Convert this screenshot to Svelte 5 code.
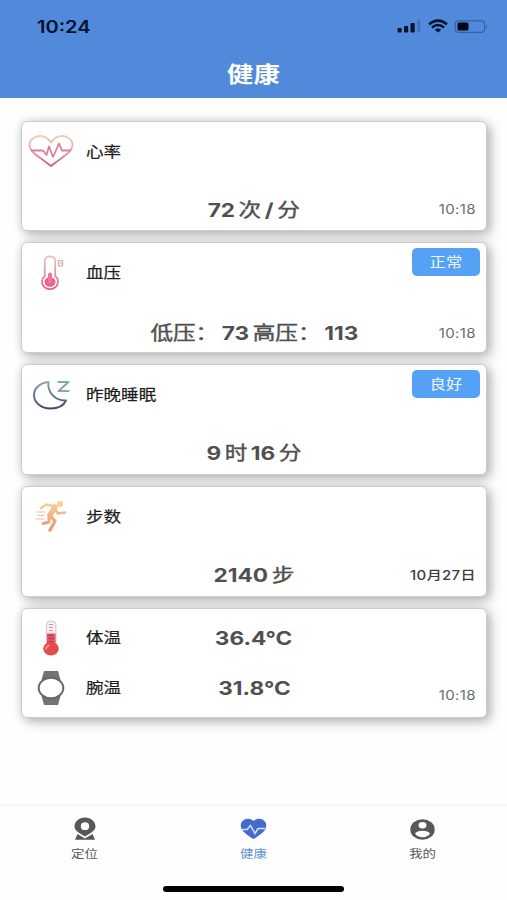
<script lang="ts">
    interface Part {
        text: string;
        unit?: boolean;
    }

    interface Card {
        icon: string;
        label: string;
        badge?: string;
        parts: Part[];
        time?: string;
        dark?: boolean;
    }

    const cards: Card[] = [
        { icon: 'heart', label: '心率', parts: [{ text: '72' }, { text: '次', unit: true }, { text: '/' }, { text: '分', unit: true }], time: '10:18' },
        {
            icon: 'pressure',
            label: '血压',
            badge: '正常',
            parts: [{ text: '低压：', unit: true }, { text: '73' }, { text: '高压：', unit: true }, { text: '113' }],
            time: '10:18'
        },
        { icon: 'sleep', label: '昨晚睡眠', badge: '良好', parts: [{ text: '9' }, { text: '时', unit: true }, { text: '16' }, { text: '分', unit: true }] },
        { icon: 'steps', label: '步数', parts: [{ text: '2140' }, { text: '步', unit: true }], time: '10月27日', dark: true }
    ];

    const temperatures = [
        { icon: 'thermometer', label: '体温', value: '36.4°C' },
        { icon: 'watch', label: '腕温', value: '31.8°C' }
    ];

    const tabs = [
        { icon: 'place', label: '定位' },
        { icon: 'health', label: '健康' },
        { icon: 'me', label: '我的' }
    ];

    let active = $state('health');
</script>

{#snippet icon(name: string)}
    {#if name === 'heart'}
        <svg width="46" height="34" viewBox="0 0 46 34" fill="none" stroke="url(#heartFill)" stroke-width="1.8" stroke-linejoin="round">
            <defs>
                <linearGradient id="heartFill" gradientUnits="userSpaceOnUse" x1="0" y1="2" x2="0" y2="32">
                    <stop offset="0" stop-color="#edceb8" />
                    <stop offset="0.5" stop-color="#e5a0ab" />
                    <stop offset="1" stop-color="#cf5688" />
                </linearGradient>
            </defs>
            <path d="M23 8.500C20 4 16.500 2 12 2C6 2 1.500 6 1.500 11C1.500 15 4 17.500 7 20L23 32L39 20C42 17.500 44.500 15 44.500 11C44.500 6 40 2 34 2C29.500 2 26 4 23 8.500Z" />
            <path d="M3 16.500H15L18.500 21L21 12.500L25 23L31 9.500L34 16.500H43" stroke="#df7d9b" />
        </svg>
    {:else if name === 'pressure'}
        <svg width="26" height="36" viewBox="0 0 26 36" fill="none">
            <defs>
                <linearGradient id="tubeFill" gradientUnits="userSpaceOnUse" x1="0" y1="1" x2="0" y2="35">
                    <stop offset="0" stop-color="#e8c9bd" />
                    <stop offset="1" stop-color="#e65b8f" />
                </linearGradient>
            </defs>
            <path d="M6.800 21V6Q6.800 1.500 12 1.500Q17.200 1.500 17.200 6V21A8 7.500 0 1 1 6.800 21Z" stroke="url(#tubeFill)" stroke-width="1.800" />
            <ellipse cx="12" cy="27" rx="5.500" ry="4.800" fill="#ec608f" />
            <path d="M12 27V19.500" stroke="#ec7898" stroke-width="4" stroke-linecap="round" />
            <path d="M19.500 5.500H25.500M19.500 8H25.500M20.500 10.800H24.500M20.500 5V11.500M24.500 5V11.500" stroke="#dfb0b0" stroke-width="1.200" />
        </svg>
    {:else if name === 'sleep'}
        <svg width="38" height="32" viewBox="0 0 38 32" fill="none" stroke="url(#moonFill)" stroke-width="2" stroke-linejoin="round">
            <defs>
                <linearGradient id="moonFill" gradientUnits="userSpaceOnUse" x1="0" y1="2" x2="0" y2="31">
                    <stop offset="0" stop-color="#8ba9ab" />
                    <stop offset="0.5" stop-color="#657393" />
                    <stop offset="1" stop-color="#4c3d70" />
                </linearGradient>
            </defs>
            <path d="M16.500 3C8 4 2 9 2 16C2 24 9.500 29.500 18.500 29.500C26 29.500 31.500 27 34 21.500C23.500 22 15 13.500 16.500 3Z" />
            <path d="M25.500 3H36.500L26.500 12H37.500" stroke="#83a9ac" />
        </svg>
    {:else if name === 'steps'}
        <svg width="32" height="32" viewBox="0 0 32 32" fill="none" stroke="url(#runFill)" stroke-linecap="round" stroke-linejoin="round">
            <defs>
                <linearGradient id="runFill" gradientUnits="userSpaceOnUse" x1="0" y1="1" x2="0" y2="31">
                    <stop offset="0" stop-color="#f8d398" />
                    <stop offset="1" stop-color="#e5976d" />
                </linearGradient>
            </defs>
            <circle cx="25" cy="4" r="3" fill="#f6cf92" stroke="none" />
            <path d="M20 7L15 15" stroke-width="5.500" />
            <path d="M19 6L11 4.500L6 8" stroke-width="2.500" />
            <path d="M20 9L23 13.500L30 12.500" stroke-width="2.500" />
            <path d="M15 16L20 21L15 30" stroke-width="3.200" />
            <path d="M14 17L14 22L8 23.500" stroke-width="3" />
            <path d="M2 12H10M3 15.500H9M1 19H9" stroke-width="1.200" stroke="#efbba0" />
        </svg>
    {:else if name === 'thermometer'}
        <svg width="18" height="36" viewBox="0 0 18 36" fill="none">
            <rect x="4.400" y="1" width="9.500" height="28" rx="4" fill="#fbf0f4" stroke="#dfbccb" stroke-width="1" />
            <path d="M5 13.500H13.500V27H5Z" fill="#e05662" />
            <ellipse cx="9" cy="28.800" rx="7.800" ry="6.700" fill="#e34b4b" />
            <path d="M7 4.500H11M7 7.500H11M7 10.500H11" stroke="#d88da4" stroke-width="1" />
            <path d="M7 15.500H11M7 18.500H11M7 21.500H11" stroke="#a93c50" stroke-width="1" />
            <path d="M4 29Q4.500 26 7 25.500" stroke="#f49a98" stroke-width="1.500" stroke-linecap="round" />
        </svg>
    {:else if name === 'watch'}
        <svg width="28" height="34" viewBox="0 0 28 34">
            <path d="M7 0H21L23.500 9H4.500ZM4.500 25H23.500L21 34H7Z" fill="#737373" />
            <ellipse cx="14" cy="17" rx="12.300" ry="10.300" fill="#fff" stroke="#686868" stroke-width="2" />
        </svg>
    {:else if name === 'place'}
        <svg width="22" height="24" viewBox="0 0 22 24" fill="currentColor">
            <path fill-rule="evenodd" d="M11 .5C17 .5 21.500 4.500 21.500 9.500C21.500 13 18 15.500 11 19.500C4 15.500 .5 13 .5 9.500C.5 4.500 5 .5 11 .5ZM11 5.300A4.200 3.900 0 1 0 11 13.100A4.200 3.900 0 1 0 11 5.300Z" />
            <path d="M3.500 17L11 21.500L18.500 17L21 22.700H1Z" />
        </svg>
    {:else if name === 'health'}
        <svg width="27" height="22" viewBox="0 0 27 22">
            <path d="M13.500 3C10.500 0 7 .300 4.500 1.500C1 3.500 -.200 7 1.500 11C3 14 9 18.500 13.500 21C18 18.500 24 14 25.500 11C27.200 7 26 3.500 22.500 1.500C20 .300 16.500 0 13.500 3Z" fill="#416ccc" />
            <path d="M2 11.500H7L10.500 7.500L15 15.500L18 10.500H25" fill="none" stroke="#d4e2fb" stroke-width="1.500" />
        </svg>
    {:else}
        <svg width="25" height="21" viewBox="0 0 25 21">
            <ellipse cx="12.500" cy="10.500" rx="12.200" ry="10.200" fill="currentColor" />
            <ellipse cx="12.500" cy="6.300" rx="3.900" ry="3.300" fill="#fff" />
            <path d="M5 14.500Q7 11.700 12.500 11.700T20 14.500Q17.500 18.300 12.500 18.300T5 14.500Z" fill="#fff" />
        </svg>
    {/if}
{/snippet}

<div class="screen">
    <header>
        <div class="status">
            <span class="clock">10:24</span>
            <svg width="92" height="16" viewBox="0 0 92 16">
                <g fill="#07112c">
                    <rect x="0.500" y="9" width="4.200" height="4.500" rx="1" />
                    <rect x="7" y="7" width="4.200" height="6.500" rx="1" />
                    <rect x="13.500" y="4" width="4.200" height="9.500" rx="1" />
                    <rect x="20.300" y="1.500" width="3" height="12" rx="1" opacity="0.2" />
                    <path d="M37.700 10.700Q41 8.500 44.300 10.700L41 13.500Z" />
                </g>
                <path d="M32 5.200Q41 -2 50 5.200M35 8.500Q41 3.500 47 8.500" fill="none" stroke="#07112c" stroke-width="2.500" />
                <rect x="58.200" y="1.800" width="29.500" height="11.500" rx="3.500" fill="none" stroke="#37619f" stroke-width="1.200" />
                <rect x="60.500" y="3.500" width="11" height="8" rx="1.500" fill="#020716" />
                <path d="M89.200 5.500Q91 7.500 89.200 9.500Z" fill="#37619f" />
            </svg>
        </div>
        <h1>健康</h1>
    </header>

    <main>
        {#each cards as card}
            <section class="card">
                <div class="head">
                    <div class="icon">{@render icon(card.icon)}</div>
                    <h2>{card.label}</h2>
                    {#if card.badge}
                        <span class="badge"><span>{card.badge}</span></span>
                    {/if}
                </div>
                <div class="foot {card.icon}">
                    <p class="value">
                        {#each card.parts as part}<span class:unit={part.unit}>{part.text}</span>{/each}
                    </p>
                    {#if card.time}
                        <time class:dark={card.dark}>{card.time}</time>
                    {/if}
                </div>
            </section>
        {/each}

        <section class="card temps">
            {#each temperatures as row, i}
                <div class="row">
                    <div class="icon">{@render icon(row.icon)}</div>
                    <h2>{row.label}</h2>
                    <p class="value">{row.value}</p>
                    {#if i === 1}
                        <time>10:18</time>
                    {/if}
                </div>
            {/each}
        </section>
    </main>

    <nav>
        {#each tabs as tab}
            <button class:active={active === tab.icon} onclick={() => (active = tab.icon)}>
                <span class="tab-icon">{@render icon(tab.icon)}</span>
                <span class="tab-label">{tab.label}</span>
            </button>
        {/each}
    </nav>
    <div class="home-bar"></div>
</div>

<style>
    :global(body) {
        margin: 0;
        background: #fefefe;
    }

    .screen {
        width: 507px;
        height: 900px;
        display: flex;
        flex-direction: column;
        overflow: hidden;
        font-family: Inter, 'Noto Sans CJK SC', sans-serif;
    }

    h1, h2, p {
        margin: 0;
    }

    svg {
        display: block;
    }

    header {
        height: 98px;
        background: #5189db;
    }

    .status {
        height: 53px;
        display: flex;
        align-items: center;
        justify-content: space-between;
        padding: 0 18px 0 37px;
    }

    .clock {
        font-size: 17px;
        font-weight: 600;
        color: #07112c;
        transform: scaleX(1.18);
        transform-origin: left;
    }

    h1 {
        line-height: 42px;
        text-align: center;
        font-size: 22px;
        font-weight: 700;
        color: #fff;
        transform: scaleX(1.2);
    }

    main {
        flex: 1;
        display: flex;
        flex-direction: column;
        gap: 11px;
        padding: 22.500px 20px 0 21px;
    }

    .card {
        height: 110.800px;
        box-sizing: border-box;
        border: 1px solid #cdcdcd;
        border-radius: 6px;
        background: #fff;
        box-shadow: 4px 4px 12px rgba(0, 0, 0, 0.26), 0 0 10px rgba(0, 0, 0, 0.12);
    }

    .head {
        height: 59px;
        display: flex;
        align-items: center;
    }

    .icon {
        width: 58px;
        display: flex;
        justify-content: center;
    }

    h2 {
        margin: 0 0 2px 6px;
        font-size: 15px;
        font-weight: 400;
        color: #1d1d1d;
        -webkit-text-stroke: 0.2px #1d1d1d;
        transform: scaleX(1.17);
        transform-origin: left;
    }

    .badge {
        align-self: flex-start;
        width: 68px;
        margin: 5px 6px 0 auto;
        border-radius: 5px;
        background: #55a1f6;
        color: #eef6ff;
        font-size: 14px;
        line-height: 28px;
        text-align: center;
    }

    .badge span {
        display: inline-block;
        transform: scaleX(1.17);
    }

    .foot {
        height: 42px;
        margin-top: 8px;
        display: grid;
        grid-template-columns: 1fr auto 1fr;
        align-items: center;
    }

    .foot.pressure {
        margin-top: 10px;
    }

    .value {
        grid-column: 2;
        display: flex;
        align-items: baseline;
        gap: 3px;
        padding-top: 2px;
        font-size: 19px;
        line-height: 28px;
        font-weight: 700;
        color: #505050;
        white-space: nowrap;
        transform: scaleX(1.19);
    }

    .unit {
        font-weight: 400;
        -webkit-text-stroke: 0.4px #505050;
    }

    time {
        grid-column: 3;
        justify-self: end;
        margin-right: 10px;
        font-size: 12.5px;
        letter-spacing: 0.3px;
        color: #6c6c6c;
        transform: scaleX(1.2);
        transform-origin: right;
    }

    time.dark {
        font-weight: 500;
        color: #3c3c3c;
    }

    .temps {
        padding-top: 4px;
    }

    .row {
        height: 50px;
        display: grid;
        grid-template-columns: 58px 1fr auto 1fr 58px;
        align-items: center;
    }

    .row .value {
        grid-column: 3;
    }

    .row time {
        grid-column: 4 / 6;
        margin-top: 16px;
    }

    nav {
        height: 72px;
        display: flex;
        border-top: 3px solid #f6f6f6;
    }

    button {
        flex: 1;
        display: flex;
        flex-direction: column;
        align-items: center;
        padding: 9px 0 0;
        border: none;
        background: none;
        color: #585858;
        font-family: inherit;
    }

    .tab-icon {
        height: 26px;
        display: flex;
        align-items: center;
    }

    .tab-label {
        margin-top: 3px;
        font-size: 11.5px;
        line-height: 18px;
        transform: scaleX(1.17);
    }

    .active {
        color: #6797d7;
    }

    .home-bar {
        width: 181px;
        height: 6px;
        margin: 7px auto 8px;
        border-radius: 3px;
        background: #000;
    }
</style>
